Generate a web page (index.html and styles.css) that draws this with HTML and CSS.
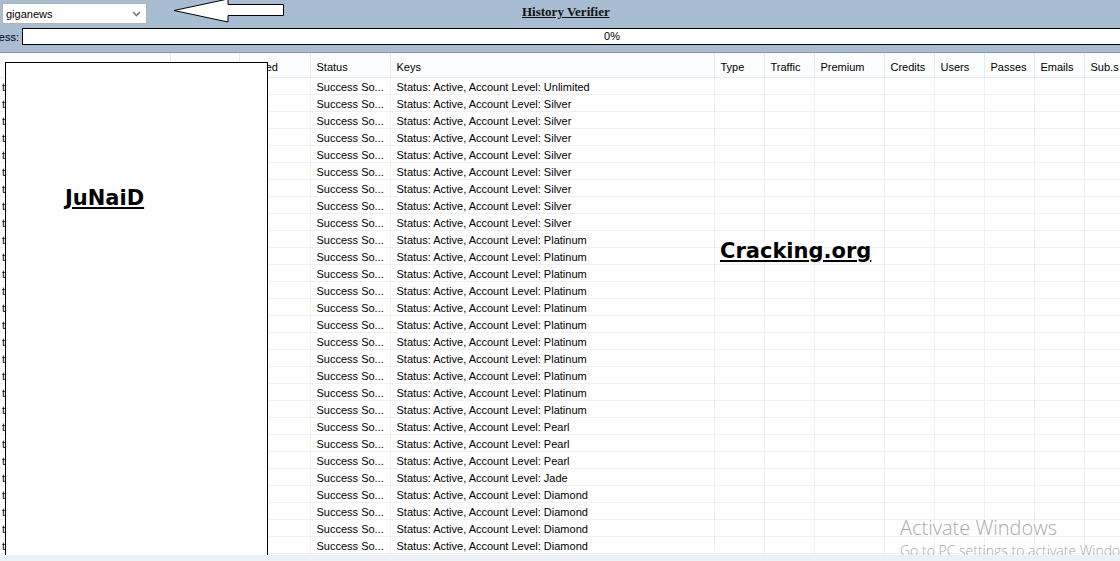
FILE: index.html
```html
<!DOCTYPE html>
<html lang="en">
<head>
  <meta charset="UTF-8">
  <title>History Verifier</title>
  <link rel="stylesheet" href="styles.css">
</head>
<body>
  <div class="top">
    <div class="toolrow">
      <div class="combo">
        <span>giganews</span>
        <svg width="9" height="6" viewBox="0 0 9 6"><path d="M1 1 L4.5 4.5 L8 1" fill="none" stroke="#777" stroke-width="1.6"/></svg>
      </div>
      <svg class="arrow" width="114" height="24" viewBox="0 0 114 24">
        <polygon points="1,11.5 55,0 55,5.5 110.5,5.5 110.5,16.5 55,16.5 55,23" fill="#fff" stroke="#000" stroke-width="1"/>
      </svg>
      <h1 class="title">History Verifier</h1>
    </div>
    <div class="progrow">
      <div class="plabel"><span>Progress:</span></div>
      <div class="pbar">0%</div>
    </div>
  </div>

  <div class="list">
    <table class="grid">
      <colgroup>
        <col style="width:170px"><col style="width:69px"><col style="width:71px"><col style="width:80px">
        <col style="width:324px"><col style="width:50px"><col style="width:50px"><col style="width:70px">
        <col style="width:50px"><col style="width:50px"><col style="width:50px"><col style="width:50px"><col style="width:60px">
      </colgroup>
      <thead>
        <tr><th>Account</th><th>Password</th><th>Tested</th><th>Status</th><th>Keys</th><th>Type</th><th>Traffic</th><th>Premium</th><th>Credits</th><th>Users</th><th>Passes</th><th>Emails</th><th>Sub.s</th></tr>
      </thead>
      <tbody id="rows"></tbody>
    </table>
    <div class="panel"><span class="junaid">JuNaiD</span></div>
    <div class="brand">Cracking.org</div>
    <div class="watermark">
      <div class="wm1">Activate Windows</div>
      <div class="wm2">Go to PC settings to activate Windows.</div>
    </div>
  </div>
  <div class="bottom"></div>

  <script>
    const levels=["Unlimited"].concat(Array(8).fill("Silver"),Array(11).fill("Platinum"),Array(3).fill("Pearl"),["Jade"],Array(4).fill("Diamond"));
    const tb=document.getElementById("rows");
    levels.forEach(l=>{
      const tr=document.createElement("tr");
      tr.innerHTML=`<td>test</td><td></td><td></td><td>Success So...</td><td>Status: Active, Account Level: ${l}</td><td></td><td></td><td></td><td></td><td></td><td></td><td></td><td></td>`;
      tb.appendChild(tr);
    });
  </script>
</body>
</html>
```

FILE: styles.css
```css
* { margin:0; padding:0; box-sizing:border-box; }
body { width:1120px; height:561px; overflow:hidden; background:#a8bcd2; font-family:"Liberation Sans",Arial,sans-serif; font-size:11px; color:#000; }

.top { height:53px; border-bottom:1px solid #8d939b; }
.toolrow { display:flex; align-items:flex-start; height:25px; }
.combo { margin:3px 0 0 2px; width:145px; height:21px; background:#fff; border:1px solid #b4b4b4;
         display:flex; align-items:center; justify-content:space-between; padding:0 5px 0 3px; }
.arrow { margin:-1px 0 0 26px; }
.title { margin:4px 0 0 235px; font:bold 13px "Liberation Serif","Times New Roman",serif; text-decoration:underline; color:#111; }

.progrow { display:flex; align-items:center; margin-top:3px; overflow:hidden; }
.plabel { flex:0 0 19px; width:19px; overflow:hidden; display:flex; justify-content:flex-end; }
.plabel span { white-space:nowrap; }
.pbar { margin-left:3px; flex:0 0 1180px; height:17px; background:#fff; border:1px solid #000; text-align:center; line-height:15px; }

.list { position:relative; height:502px; background:#fff; overflow:hidden; }
.grid { border-collapse:collapse; table-layout:fixed; width:1120px; }
.grid th { height:24px; background:#fcfdfe; font-weight:normal; text-align:left; vertical-align:top; line-height:14px; padding:7px 6px 0; border-right:1px solid #e6ebf2; border-bottom:1px solid #e8edf4; white-space:nowrap; overflow:hidden; }
.grid td { height:17px; vertical-align:top; line-height:14px; padding:2px 6px 0; border-right:1px solid #eef0f3; border-bottom:1px solid #eef0f3; white-space:nowrap; overflow:hidden; }
.grid td:first-child { padding-left:2px; }

.panel { position:absolute; left:5px; top:9px; width:263px; height:500px; background:#fff; border:1px solid #000; padding:123px 0 0 59px; }
.junaid, .brand { font:bold 21px "DejaVu Sans",Verdana,sans-serif; text-decoration:underline; color:#000; }
.brand { position:absolute; left:720px; top:186px; }

.watermark { position:absolute; left:900px; top:461px; color:#a9a9a9; font-family:"Open Sans","Noto Sans",sans-serif; white-space:nowrap; }
.wm1 { font-size:20px; font-weight:300; }
.wm2 { font-size:14px; font-weight:300; }

.bottom { height:6px; background:#ecf1f8; }
```
